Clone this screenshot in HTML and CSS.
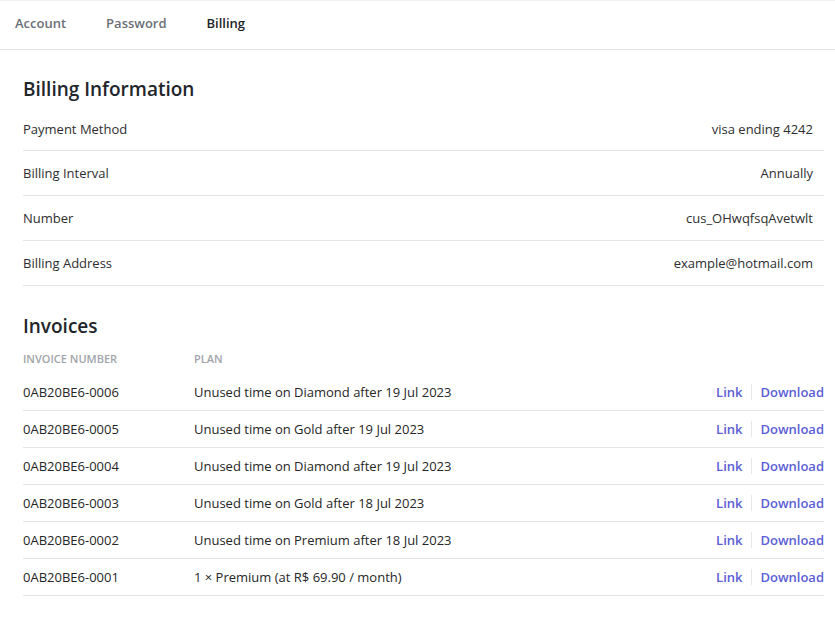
FILE: index.html
```html
<!DOCTYPE html>
<html>
<head>
<meta charset="utf-8">
<link rel="stylesheet" href="styles.css">
</head>
<body>
<div class="card">
  <nav class="tabs">
    <a class="tab">Account</a>
    <a class="tab">Password</a>
    <a class="tab active">Billing</a>
  </nav>
  <div class="content">
    <section class="info">
      <h2 class="title">Billing Information</h2>
      <div class="row"><span class="label">Payment Method</span><span class="value">visa ending 4242</span></div>
      <div class="row"><span class="label">Billing Interval</span><span class="value">Annually</span></div>
      <div class="row"><span class="label">Number</span><span class="value">cus_OHwqfsqAvetwlt</span></div>
      <div class="row"><span class="label">Billing Address</span><span class="value">example@hotmail.com</span></div>
    </section>
    <section class="invoices">
      <h2 class="title inv-title">Invoices</h2>
      <div class="thead">
        <span class="c-num">Invoice Number</span>
        <span class="c-plan">Plan</span>
      </div>
      <div class="trow"><span class="c-num">0AB20BE6-0006</span><span class="c-plan">Unused time on Diamond after 19 Jul 2023</span><span class="actions"><a>Link</a><i class="sep"></i><a>Download</a></span></div>
      <div class="trow"><span class="c-num">0AB20BE6-0005</span><span class="c-plan">Unused time on Gold after 19 Jul 2023</span><span class="actions"><a>Link</a><i class="sep"></i><a>Download</a></span></div>
      <div class="trow"><span class="c-num">0AB20BE6-0004</span><span class="c-plan">Unused time on Diamond after 19 Jul 2023</span><span class="actions"><a>Link</a><i class="sep"></i><a>Download</a></span></div>
      <div class="trow"><span class="c-num">0AB20BE6-0003</span><span class="c-plan">Unused time on Gold after 18 Jul 2023</span><span class="actions"><a>Link</a><i class="sep"></i><a>Download</a></span></div>
      <div class="trow"><span class="c-num">0AB20BE6-0002</span><span class="c-plan">Unused time on Premium after 18 Jul 2023</span><span class="actions"><a>Link</a><i class="sep"></i><a>Download</a></span></div>
      <div class="trow"><span class="c-num">0AB20BE6-0001</span><span class="c-plan">1 × Premium (at R$ 69.90 / month)</span><span class="actions"><a>Link</a><i class="sep"></i><a>Download</a></span></div>
    </section>
  </div>
</div>
</body>
</html>
```
FILE: styles.css
```css
* { box-sizing: border-box; }
html, body { margin: 0; padding: 0; background: #fff; }
body {
  font-family: "Open Sans", "Noto Sans", sans-serif;
  font-size: 13px;
  color: #2e2e2e;
}
.card {
  width: 835px;
  height: 620px;
  background: #fff;
  border-top: 1px solid #f1f1f1;
  box-shadow: 0 1px 2px rgba(0,0,0,0.14);
}
.tabs {
  display: flex;
  gap: 40px;
  height: 49px;
  align-items: center;
  padding-left: 15px;
  padding-bottom: 5px;
  border-bottom: 1px solid #e5e5e5;
}
.tab {
  font-weight: 600;
  font-size: 13px;
  color: #6b6f76;
}
.tab.active { color: #1f2328; }
.content {
  padding: 0 11px 0 23px;
}
.title {
  margin: 0;
  font-size: 19px;
  font-weight: 600;
  color: #22252a;
  height: 58px;
  padding-top: 25px;
  line-height: 28px;
}
.row {
  display: flex;
  justify-content: space-between;
  align-items: center;
  height: 45px;
  padding-right: 11px;
  border-bottom: 1px solid #e4e4e4;
}
.info .row:nth-child(2) { height: 43px; }
.invoices .inv-title { height: 59px; padding-top: 26px; }
.thead {
  display: flex;
  height: 29px;
  align-items: center;
  font-size: 11px;
  font-weight: 600;
  text-transform: uppercase;
  color: #a1a4aa;
  padding-top: 4px;
  padding-bottom: 7px;
}
.c-num { width: 171px; flex: none; }
.c-plan { flex: 1; }
.trow {
  display: flex;
  align-items: center;
  height: 37px;
  border-bottom: 1px solid #e4e4e4;
  color: #262626;
}
.actions {
  display: flex;
  align-items: center;
  font-weight: 600;
  color: #5b5ed6;
}
.sep {
  display: inline-block;
  width: 1px;
  height: 16px;
  background: #e6e6e6;
  margin: 0 8px 0 9px;
}
```
